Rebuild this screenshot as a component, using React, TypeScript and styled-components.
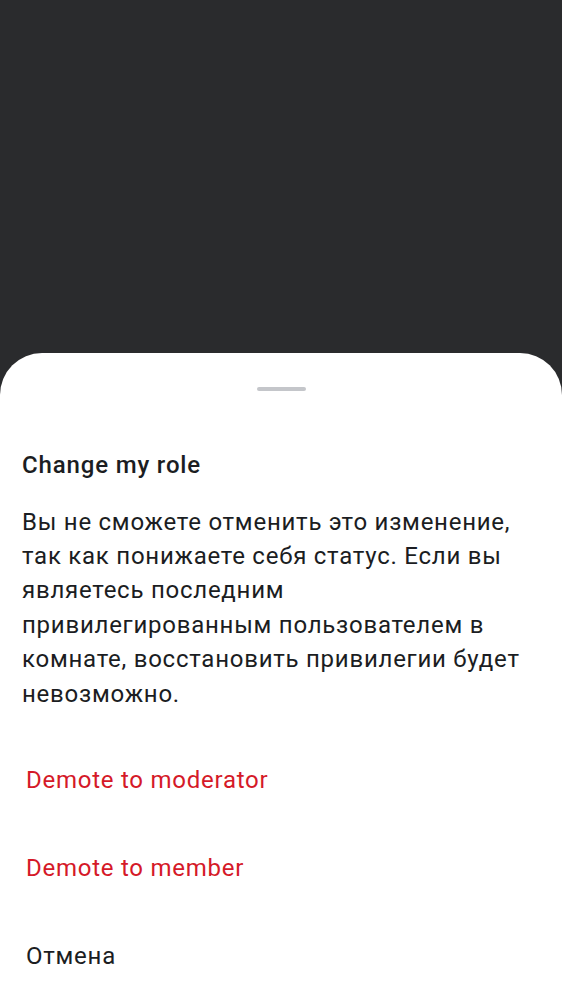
import React from "react";
import styled, { createGlobalStyle } from "styled-components";

const GlobalStyle = createGlobalStyle`
  html, body {
    margin: 0;
    padding: 0;
    background: #2a2b2d;
  }
  body {
    font-family: Roboto, "Noto Sans", "Liberation Sans", sans-serif;
  }
  * { box-sizing: border-box; }
`;

const Screen = styled.div`
  width: 562px;
  height: 1000px;
  display: flex;
  flex-direction: column;
  justify-content: flex-end;
  background: #2a2b2d;
  overflow: hidden;
`;

const Sheet = styled.div`
  background: #ffffff;
  border-radius: 42px 42px 0 0;
  height: 647px;
  display: flex;
  flex-direction: column;
`;

const Handle = styled.div`
  align-self: center;
  width: 49px;
  height: 7px;
  border-radius: 4px;
  background: #c4c6ca;
  margin-top: 34px;
`;

const Title = styled.h2`
  margin: 60px 0 0;
  padding: 0 22px;
  font-size: 24px;
  line-height: 28px;
  font-weight: 500;
  letter-spacing: 0.85px;
  color: #1b1d22;
`;

const Body = styled.p`
  margin: 26px 0 0;
  padding: 0 22px;
  font-size: 24px;
  line-height: 34.4px;
  font-weight: 400;
  letter-spacing: 0.75px;
  color: #1b1d22;
`;

const Actions = styled.div`
  margin-top: 25px;
  display: flex;
  flex-direction: column;
`;

const Action = styled.button<{ $danger?: boolean }>`
  height: 88px;
  display: flex;
  align-items: center;
  padding: 0 26px;
  border: none;
  background: transparent;
  text-align: left;
  font-family: inherit;
  font-size: 24px;
  font-weight: 400;
  letter-spacing: 0.75px;
  color: ${(p) => (p.$danger ? "#d51928" : "#1b1d22")};
  cursor: pointer;
`;

export default function App() {
  return (
    <>
      <GlobalStyle />
      <Screen>
        <Sheet>
          <Handle />
          <Title>Change my role</Title>
          <Body>
            Вы не сможете отменить это изменение, так как понижаете себя статус.
            Если вы являетесь последним привилегированным пользователем в
            комнате, восстановить привилегии будет невозможно.
          </Body>
          <Actions>
            <Action $danger>Demote to moderator</Action>
            <Action $danger>Demote to member</Action>
            <Action>Отмена</Action>
          </Actions>
        </Sheet>
      </Screen>
    </>
  );
}
